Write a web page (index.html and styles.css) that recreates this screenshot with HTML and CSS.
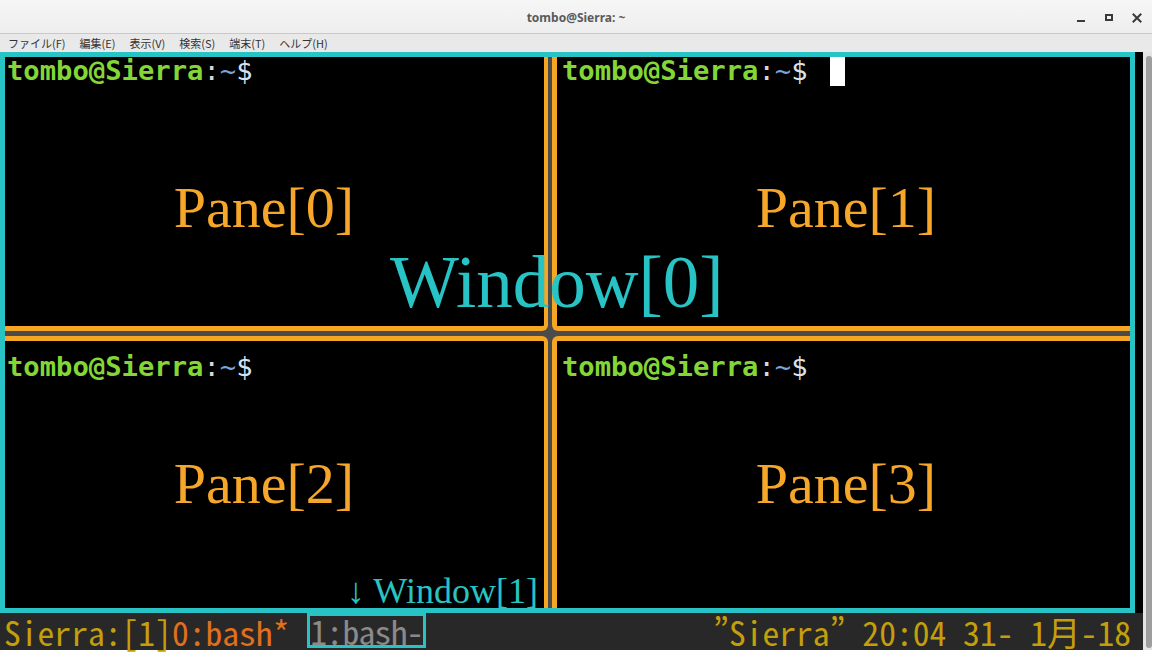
FILE: index.html
```html
<!DOCTYPE html>
<html lang="ja">
<head>
<meta charset="utf-8">
<title>tombo@Sierra: ~</title>
<link rel="stylesheet" href="styles.css">
</head>
<body>
<div class="app">
  <header class="titlebar">
    <div class="spacer"></div>
    <div class="title">tombo@Sierra: ~</div>
    <div class="controls">
      <svg width="12" height="12" viewBox="0 0 12 12"><rect x="2" y="8" width="8" height="2" fill="#3a3a3a"/></svg>
      <svg width="12" height="12" viewBox="0 0 12 12"><rect x="3" y="3" width="6" height="5" fill="none" stroke="#3a3a3a" stroke-width="2"/></svg>
      <svg width="12" height="12" viewBox="0 0 12 12"><path d="M2.5 2.5 L9.5 9.5 M9.5 2.5 L2.5 9.5" stroke="#3a3a3a" stroke-width="2" stroke-linecap="square"/></svg>
    </div>
  </header>
  <nav class="menubar">
    <span>ファイル(F)</span>
    <span>編集(E)</span>
    <span>表示(V)</span>
    <span>検索(S)</span>
    <span>端末(T)</span>
    <span>ヘルプ(H)</span>
  </nav>
  <div class="term">
    <div class="screen">
      <div class="window">
        <div class="panes">
          <section class="pane p0">
            <div class="prompt"><span class="user">tombo@Sierra</span><span class="colon">:</span><span class="tilde">~</span><span class="dollar">$</span></div>
            <div class="label">Pane[0]</div>
          </section>
          <section class="pane p1">
            <div class="prompt"><span class="user">tombo@Sierra</span><span class="colon">:</span><span class="tilde">~</span><span class="dollar">$</span><span class="cursor"></span></div>
            <div class="label">Pane[1]</div>
          </section>
          <section class="pane p2">
            <div class="prompt"><span class="user">tombo@Sierra</span><span class="colon">:</span><span class="tilde">~</span><span class="dollar">$</span></div>
            <div class="label">Pane[2]</div>
          </section>
          <section class="pane p3">
            <div class="prompt"><span class="user">tombo@Sierra</span><span class="colon">:</span><span class="tilde">~</span><span class="dollar">$</span></div>
            <div class="label">Pane[3]</div>
          </section>
        </div>
        <div class="note-window0">Window[0]</div>
        <div class="note-window1">↓ Window[1]</div>
      </div>
      <div class="status mono">
        <div class="left"><span class="gold">Sierra:[1]</span><span class="orange">0:bash*</span> <span class="win1">1:bash-</span></div>
        <div class="right gold">”Sierra” 20:04 31- 1月-18</div>
      </div>
    </div>
    <div class="scrollbar"><div class="thumb"></div></div>
  </div>
</div>
</body>
</html>
```

FILE: styles.css
```css
* { box-sizing: border-box; margin: 0; padding: 0; }
html, body { width: 1152px; height: 658px; overflow: hidden; background: #ffffff; }
body { font-family: "Noto Sans", "Noto Sans CJK JP", sans-serif; }

.titlebar {
  height: 34px;
  background: linear-gradient(#f6f6f6, #eeeeee);
  border-bottom: 1px solid #c8c8c8;
  display: grid;
  grid-template-columns: 1fr auto 1fr;
  align-items: center;
}
.title { font-size: 12px; font-weight: 700; color: #5a5a5a; padding-top: 2px; }
.controls { justify-self: end; display: flex; gap: 16px; padding-right: 9px; padding-top: 2px; }
.controls svg { display: block; }

.menubar {
  height: 18px;
  background: #e9e9e9;
  display: flex;
  align-items: center;
  gap: 14px;
  padding-left: 8px;
  font-family: "Noto Sans CJK JP", sans-serif;
  font-size: 11px;
  color: #333333;
}
.menubar span { display: block; line-height: 14px; }

.term { display: flex; height: 598px; }
.screen { width: 1143px; background: #000; display: flex; flex-direction: column; }
.scrollbar { width: 9px; background: #e4e4e4; padding: 4px 0 2px 3px; }
.thumb { width: 6px; height: 100%; background: #9e9e9e; border-radius: 3px; }

.window {
  position: relative;
  width: 1135px;
  height: 561px;
  border: 5px solid #28c3c4;
}
.panes {
  display: grid;
  grid-template-columns: 543px 578px;
  grid-template-rows: 274px 272px;
  column-gap: 4px;
  row-gap: 5px;
  height: 100%;
  background: #4b4b4b;
}
.pane { background: #000; display: flex; flex-direction: column; }
.p0 { border-right: 4px solid #f5a623; border-bottom: 5px solid #f5a623; border-bottom-right-radius: 6px; padding-left: 2px; }
.p1 { border-left: 5px solid #f5a623; border-bottom: 5px solid #f5a623; border-bottom-left-radius: 6px; padding-left: 5px; }
.p2 { border-right: 4px solid #f5a623; border-top: 5px solid #f5a623; border-top-right-radius: 6px; padding-left: 2px; padding-top: 12px; }
.p3 { border-left: 5px solid #f5a623; border-top: 5px solid #f5a623; border-top-left-radius: 6px; padding-left: 5px; padding-top: 12px; }

.mono {
  font-family: "Noto Sans Mono CJK JP", "Noto Sans CJK JP", "DejaVu Sans Mono", monospace;
  font-feature-settings: "hwid";
}
.prompt {
  font-family: "DejaVu Sans Mono", "Liberation Mono", monospace;
  font-size: 27.2px;
  height: 28px;
  white-space: pre;
  font-weight: 700;
  display: flex;
  align-items: flex-start;
}
.prompt span { display: inline-block; line-height: 28px; height: 28px; }
.user { color: #84d636; }
.colon { color: #d8d8d8; font-weight: 400; }
.tilde { color: #7aa6da; font-weight: 400; }
.dollar { color: #d6e2ee; font-weight: 400; }
.prompt .cursor { width: 15px; height: 29px; background: #ffffff; margin-left: 22px; }

.label {
  flex: 1;
  display: flex;
  align-items: center;
  justify-content: center;
  font-family: "Liberation Serif", "DejaVu Serif", serif;
  font-size: 58px;
  color: #f6a72a;
  padding-top: 3px;
}
.p0 .label { padding-right: 23px; }
.p2 .label, .p3 .label { padding-top: 0; padding-bottom: 22px; }
.p2 .label { padding-right: 23px; }

.note-window0 {
  position: absolute;
  left: 385px;
  top: 189px;
  font-family: "Liberation Serif", "DejaVu Serif", serif;
  font-size: 73px;
  line-height: 73px;
  color: #28c3c4;
}
.note-window1 {
  position: absolute;
  left: 342px;
  top: 516px;
  font-family: "Liberation Serif", "DejaVu Serif", serif;
  font-size: 36px;
  line-height: 36px;
  color: #28c3c4;
  white-space: nowrap;
}

.status {
  height: 37px;
  background: #282828;
  display: flex;
  justify-content: space-between;
  align-items: center;
  padding: 0 12px 0 4px;
  font-size: 33.6px;
  line-height: 37px;
  white-space: pre;
}
.gold { color: #c49f0c; }
.orange { color: #e0701c; }
.win1 {
  display: inline-block;
  vertical-align: top;
  color: #8a8a8a;
  border: 3px solid #28c3c4;
  height: 35px;
  line-height: 29px;
  letter-spacing: -0.7px;
  margin-left: 1px;
}
```
